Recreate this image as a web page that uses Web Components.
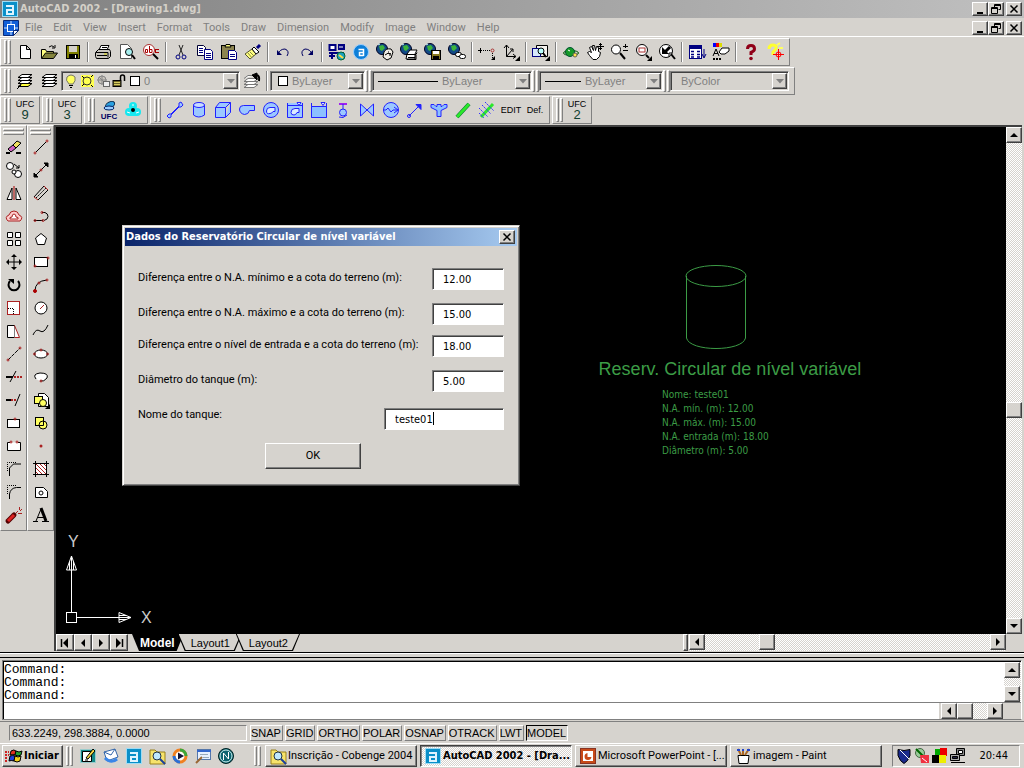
<!DOCTYPE html>
<html lang="pt-BR">
<head>
<meta charset="utf-8">
<title>AutoCAD 2002 - [Drawing1.dwg]</title>
<style>
html,body{height:100%}
body{margin:0;--face:#d6d3ce;background:var(--face);color:#000;--ui:"DejaVu Sans Condensed","DejaVu Sans",sans-serif;--label:Roboto,"Liberation Sans",sans-serif;--narrow:"Liberation Sans",Arial,sans-serif;font:11px/14px var(--ui)}
</style>
</head>
<body>
<cad-desktop></cad-desktop>
<script>
const svg = (body, attrs = '') => `<svg viewBox="0 0 20 20" width="20" height="20" fill="none" stroke="#000" ${attrs}>${body}</svg>`;
const globe = '<circle cx="7" cy="7" r="5.5" fill="#124a86" stroke="#002"/><path d="M4 4l4-1 2 3-3 3-2-1z" fill="#3cb43c" stroke="none"/><path d="M3 3l2-1" stroke="#cff"/>';
const blueA = '<rect x="2.500" y="2.500" width="15" height="15" fill="#0a8fc8" stroke="#9fdcf4"/><path d="M6 7h7v8H7v-4h6" stroke="#dff4ff" stroke-width="2" fill="none"/>';
const folderMag = '<path d="M3 4h5l2 2h8v12H3z" fill="#f7e36a" stroke="#98801c"/><circle cx="10" cy="10" r="4" fill="#bfe8ff" stroke="#234"/><path d="M13 13l5 5" stroke="#1c3f9c" stroke-width="2"/>';
const ICONS = {
 appA: blueA,
 doc: '<path d="M2.500 2.500h15v10l-5 5h-10z" fill="#1260d8" stroke="#0a2a78"/><path d="M10 3v14M3 10h14" stroke="#cfe4ff"/><rect x="6.500" y="6.500" width="7" height="7" fill="#1260d8" stroke="#fff"/><path d="M12.500 17.500v-5h5z" fill="#fff" stroke="#0a2a78"/>',
 new: '<path d="M5.500 3.500h6l4 4v9h-10zM11.500 3.500v4h4" fill="#fff"/>',
 open: '<path d="M2.500 16V7.500h4l1 2h7V11" fill="#ffff80"/><path d="M2.500 16.500l4-5.500h12l-4 5.500z" fill="#84843c"/><path d="M10 5q3-2.500 5 0M16 3v3h-3"/>',
 save: '<rect x="3.500" y="3.500" width="13" height="13" fill="#808000"/><rect x="6" y="4" width="8" height="6" fill="#d4d0c8" stroke="none"/><path d="M6 12h9v5H6z" fill="#000" stroke="none"/><path d="M12.500 13v3" stroke="#fff"/>',
 print: '<path d="M6 8l2-4.500h8L14 8z" fill="#fff"/><path d="M2.500 10.500l3-3h11l1 2v5l-2 2h-12l-1-2z" fill="#c8c4bc"/><path d="M3 10.500h12v5M4 13.500h10"/><path d="M9 5.500h5"/><path d="M11 12h3" stroke="#cc0"/>',
 preview: '<path d="M3.500 2.500h7l4 4v10h-11z" fill="#fff" stroke="#555"/><circle cx="12" cy="10" r="3.500" fill="#a8f0f0"/><path d="M15 13l3 4" stroke-width="2"/>',
 find: '<circle cx="8" cy="8" r="5.500" fill="#fff" stroke="#a33"/><path d="M4.500 7.500h2v3h-2zM8.500 4v6.500h2.500V7.500H9" stroke="#a00"/><path d="M12 12l5 5" stroke-width="2"/><path d="M14 7.500h4M14 10.500h4M14.500 7v4" stroke="#a00"/>',
 cut: '<path d="M8 3l4 10M12 3L8 13" stroke="#222"/><circle cx="7" cy="15" r="2" stroke="#000080"/><circle cx="13" cy="15" r="2" stroke="#000080"/>',
 copy: '<path d="M2.500 3.500h6l2 2v8h-8z" fill="#fff" stroke="#003"/><path d="M9.500 7.500h6l2 2v8h-8z" fill="#fff" stroke="#000080"/><path d="M4 6.500h4M4 8.500h4M4 10.500h4M11 11.500h5M11 13.500h5M11 15.500h5" stroke="#000080"/>',
 paste: '<rect x="2.500" y="3.500" width="13" height="13" fill="#8c8450"/><path d="M6 5l1-2.500h4L12 5z" fill="#ffff80"/><path d="M9.500 8.500h6l2 2v7h-8z" fill="#fff" stroke="#000080"/><path d="M11 12.500h5M11 14.500h5" stroke="#000080"/>',
 brush: '<path d="M2 12l7-5 4 5-6 5z" fill="#ffff80" stroke="#553"/><path d="M9 7l2-2 5 5-3 2z" fill="#fff"/><path d="M14 6l3-3" stroke="#000080" stroke-width="3"/><path d="M5 11l4 5M7 10l4 4" stroke="#884"/>',
 undo: '<path d="M5 12q2-5 7-5 5 2 2 7" stroke="#000060"/><path d="M4 8v5h5z" fill="#000060" stroke="none"/>',
 redo: '<path d="M15 12q-2-5-7-5-5 2-2 7" stroke="#000060"/><path d="M16 8v5h-5z" fill="#000060" stroke="none"/>',
 today: '<rect x="2.500" y="3" width="6" height="5" fill="#fff" stroke="#000080" stroke-width="2"/><rect x="11" y="2" width="7" height="6" fill="#000080" stroke="none"/><path d="M2 11h15M5 11v6M2 14h6" stroke="#000080" stroke-width="2"/><path d="M12 5h4" stroke="#fff"/><circle cx="14" cy="14" r="4" fill="#1aa0c0" stroke="#063"/><path d="M12 13l4 3" stroke="#fd4" stroke-width="2"/>',
 point: '<circle cx="10" cy="10" r="7.500" fill="#0d7fd8" stroke="#9ccfff"/><path d="M7.500 7.500h5v6.500M12.500 10.500h-4v3h4" stroke="#fff" stroke-width="1.500"/>',
 g1: globe + '<path d="M9 10q2-4 7-3l2 3-2 6-4 2-4-3z" fill="#f2efe8"/><path d="M10 13q3-3 6-1M13 10h1M15 11v3"/>',
 g2: globe + '<path d="M8 12l3-4h7l-2 4v5H7z" fill="#fff"/><path d="M7 12.500h10l1-2M9 15.500h7M8 17.500h9V13"/>',
 g3: globe + '<rect x="8.500" y="8.500" width="9" height="9" fill="#887a20"/><path d="M10 9h6v3h-6z" fill="#fff" stroke="none"/><path d="M10 14h6v3h-6z" fill="#000" stroke="none"/>',
 g4: globe + '<rect x="8.500" y="10.500" width="6" height="4" rx="2" fill="#fff"/><rect x="12.500" y="12.500" width="6" height="4" rx="2" fill="#fff"/>',
 track: '<path d="M2 8.500h11M15.500 11v5" stroke-dasharray="1 1"/><path d="M3.500 6v5M1 8.500h4"/><circle cx="15.500" cy="8.500" r="1.500" stroke="#a33"/><path d="M18 14v4h-4z" fill="#000" stroke="none"/>',
 ucs: '<path d="M5.500 3v11.500h9M5.500 14.500l6-7M3 6l2.500-3L8 6M12 12l3 2.500-3 2M9 7h3v3"/><path d="M19 14v5h-5z" fill="#000" stroke="none"/>',
 view: '<path d="M5.500 3.500h11v11h-11z" fill="#f4f2ee"/><rect x="1.500" y="6.500" width="8" height="8" fill="#d6e8fa" stroke="#000080"/><circle cx="10" cy="9" r="3" fill="#bff"/><path d="M12 11l3 4" stroke-width="2"/><path d="M19 14v5h-5z" fill="#000" stroke="none"/>',
 orbit: '<ellipse cx="10" cy="11" rx="7.500" ry="2.500" stroke="#050"/><circle cx="9" cy="10" r="4.500" fill="#169a28" stroke="#053"/><path d="M7 8l2 1" stroke="#fff"/><circle cx="14" cy="13" r="2" fill="#ffe34a" stroke="#665"/>',
 pan: '<path d="M4.500 13.500l-2-3 2-1 2 1-2-5 2-1 2 4-1-5 2 0 1 5 1-4 2 1v4l2 1-1 4-3 3H8z" fill="#fff"/><path d="M15.500 1v7M12 4.500h7M14 2.500h3M14 6.500h3"/>',
 zoomrt: '<circle cx="7" cy="7.500" r="4.500" fill="#fff"/><path d="M11 11l5 6" stroke-width="2"/><path d="M16.500 2v4M14 4.500h5M14 8.500h5"/>',
 zoomw: '<circle cx="9" cy="8" r="5.500" fill="#fff"/><rect x="6" y="6" width="6" height="4" stroke="#a33"/><path d="M13 13l3 3" stroke-width="2"/><path d="M19 14v5h-5z" fill="#000" stroke="none"/>',
 zoomp: '<circle cx="9" cy="9" r="6.500" fill="#fff"/><path d="M13 5l-5 5" stroke-width="3"/><path d="M5 5v7h7z" fill="#000" stroke="none"/><path d="M14 12l4 5" stroke-width="2"/><path d="M12 15v-4h3"/>',
 dc: '<rect x="2.500" y="3.500" width="12" height="13" fill="#fff" stroke="#000080"/><path d="M2 3h13v4H2z" fill="#000080" stroke="none"/><path d="M4 9.500h3M4 12.500h3M4 15h3M10 9.500h3M10 12.500h3M10 15h3" stroke="#000080" stroke-width="1.500"/><path d="M17 7v8M15 12l2 4 2-4" stroke="#000080"/>',
 props: '<path d="M2 3h3" stroke="#00f" stroke-width="4"/><path d="M5 3h3" stroke="#e00" stroke-width="4"/><path d="M8 3h3" stroke="#dd0" stroke-width="4"/><path d="M2 14l3-7 3 7M3 11.500h4"/><path d="M2 17h9" stroke-width="2" stroke-dasharray="2 1"/><path d="M8 10l3-4h7v3l-4 3h-4z" fill="#fff"/>',
 help: '<path d="M6.500 7q0-3.500 3.500-3.500T13.500 7q0 2-3.500 3.500V13" stroke="#900018" stroke-width="3"/><circle cx="10" cy="16.500" r="1.800" fill="#900018" stroke="none"/>',
 aa: '<path d="M4 7q0-4 4-4t3 4l-3 3v3" stroke="#ffff30" stroke-width="3"/><path d="M12 3l3-2M14 6h4" stroke="#ffff60" stroke-width="2"/><path d="M13.500 7v11M8 12.500h11" stroke="#f00"/><circle cx="13.500" cy="12.500" r="2.500" stroke="#f00"/>',
 layers: '<path d="M3 6.500l4-3h10l-4 3zM3 9.500l4-3h10l-4 3zM3 12.500l4-3h10l-4 3z" fill="#fff"/><path d="M3 15.500l4-3h10l-4 3z" fill="#ffff40"/><path d="M2 18l4-4"/>',
 layers2: '<path d="M3 15.500l4-3h11l-4 3zM3 12.500l4-3h11l-4 3zM3 9.500l4-3h11l-4 3zM3 6.500l4-3h11l-4 3z" fill="#fff"/>',
 layers3: '<path d="M2 16.500l4-3h10l-4 3zM2 13.500l4-3h10l-4 3zM2 10.500l4-3h10l-4 3zM2 7.500l4-3h6" fill="#fff" stroke="#777"/><path d="M17 10q1-6-3-6" stroke-width="2"/><path d="M10 4l5-2v7z" fill="#000"/>',
 bulb: '<path d="M8 13q-4-4-2-7 4-4 8 0 1 4-2 7z" fill="#ffff60" stroke="#776"/><path d="M8 14.500h4M9 16.500h2"/>',
 sun: '<rect x="4" y="4" width="13" height="12" fill="#ffff50" stroke="none"/><circle cx="10" cy="10" r="4" fill="#ffff50" stroke="#333"/><path d="M5 5l2 2M14 14l2 2M16 4l-2 2M5 15l2-2"/>',
 freeze: '<circle cx="9" cy="9" r="4" stroke="#888" fill="#c8c4bc"/><path d="M4 9h10M9 4v10M6 6l6 6" stroke="#888"/><rect x="10.500" y="10.500" width="6" height="5" fill="#eee" stroke="#666"/>',
 lock: '<rect x="4" y="9.500" width="8" height="6" fill="#6b6428"/><path d="M5 11.500h6M5 13.500h6" stroke="#d8ce60"/><path d="M11.500 9V6q0-2 2-2t2 2v4" stroke-width="1.500"/>',
 swatch: '<rect x="5.500" y="5.500" width="9" height="9" fill="#fff"/>',
 ufcA: '<ellipse cx="11" cy="5" rx="5" ry="3" fill="#2aa0e0" transform="rotate(-30 11 5)" stroke="#024"/><ellipse cx="10" cy="8" rx="5" ry="2" stroke="#026" fill="#9cf"/>',
 ufcB: '<circle cx="10" cy="6" r="4" fill="#18e8f0" stroke="none"/><circle cx="6" cy="12" r="4" fill="#18e8f0" stroke="none"/><circle cx="14" cy="12" r="4" fill="#18e8f0" stroke="none"/><path d="M5 16h10l-5-5z" fill="#18e8f0" stroke="none"/><circle cx="10" cy="10" r="2" fill="#000" stroke="none"/><path d="M4 12l3 1M16 12l-3 1M9 5h2" stroke="#fff"/>',
 u1: '<path d="M2 16l2 2 2-1 0-2 8-8 2 0 2-2-2-3-2 1v3L6 14 4 14z" fill="#9cc8ff"/>',
 u2: '<path d="M4.500 5v10q5 4 11 0V5" fill="#9cc8ff"/><ellipse cx="10" cy="5" rx="5.500" ry="2.500" fill="#c8dcff"/>',
 u3: '<path d="M2.500 7.500h10v10h-10zM2.500 7.500l4-5h11l-5 5M17.500 2.500v10l-5 5" fill="#9cc8ff"/>',
 u4: '<path d="M2.500 9q0-3.500 4-3.500h11v5h-5q-1 4-5 4-5-1-5-5.500z" fill="#9cc8ff"/>',
 u5: '<circle cx="10" cy="10" r="7.500" fill="#9cc8ff"/><path d="M5.500 11q0-3.500 3.500-3.500h5v4h-2q-1 2-3 2-3.500 1-3.500-2.500z" fill="#dcecff"/>',
 u6: '<path d="M2.500 3v14.500h15V3M2.500 5.500h15" fill="#9cc8ff"/><path d="M6 12.500q0-4 4-4h4v4h-2q-1 2.500-3 2.500-3 0-3-2.500z" fill="#dcecff"/><path d="M12 2.500h4l-2 3z" fill="#fff"/>',
 u7: '<path d="M2.500 3v14.500h15V3"/><path d="M2.500 6.500h15v11h-15z" fill="#8cc0ff"/><path d="M12 2.500h4l-2 3z" fill="#fff"/>',
 u8: '<path d="M6 4h8" stroke="#a020f0" stroke-width="2"/><path d="M10 4v6"/><circle cx="10" cy="12.500" r="3.500" fill="#9cc8ff"/><path d="M6 17q4 2 8-2"/>',
 u9: '<path d="M3.500 4v12l13-12v12z" fill="#9cc8ff"/>',
 u10: '<circle cx="10" cy="10" r="7.500" fill="#9cc8ff"/><path d="M2 10h3l2-2 3 4 2-2h5M13 7l4 3-4 3"/>',
 u11: '<path d="M4 16L15 5"/><path d="M11 4.500h5v5z" fill="#22f"/><circle cx="4" cy="16" r="1.500"/>',
 u12: '<path d="M2 4.500h3l2 2h1v-2h4v2h1l2-2h3v3l-6 3v6h-4v-6l-6-3z" fill="#8cc0ff"/>',
 u13: '<path d="M4 17L16 4" stroke="#063" stroke-width="4"/><path d="M4 17L16 4" stroke="#2be82b" stroke-width="3"/>',
 u14: '<path d="M4 17L16 4" stroke="#2be82b" stroke-width="3"/><path d="M2 8l9 9M5 5l9 9M8 2l9 9M2 13l5 5" stroke="#33f" stroke-dasharray="2 1"/>',
 erase: '<path d="M4 12l5-4 3 3-5 4z" fill="#d060c0"/><path d="M9 8l4-4 4 2-5 5z" fill="#f0e060"/><path d="M2 16h4M12 16h5" stroke-width="2"/>',
 copyo: '<circle cx="6" cy="6" r="3.500" fill="#fff"/><circle cx="14" cy="14" r="3.500" fill="#fff"/><circle cx="10" cy="12" r="2" fill="#fff"/><path d="M10 4l5 4M15 5v3h-3"/>',
 mirror: '<path d="M8 5v11.500H3zM12 5v11.500h5z" fill="#fff"/><path d="M10 3v14" stroke="#a00"/>',
 offset: '<path d="M4 15q-4-4 1-6 1-4 5-4t5 4q5 2 1 6z" fill="#fcc" stroke="#a22"/><path d="M6 13q-1-2 2-2 0-3 2-3t2 3q3 0 2 2z" fill="#fff" stroke="#a22"/>',
 array: '<path d="M3.500 3.500h5v5h-5zM11.500 3.500h5v5h-5zM3.500 11.500h5v5h-5zM11.500 11.500h5v5h-5z" fill="#fff"/>',
 move: '<path d="M10 4v12M4 10h12"/><path d="M10 2l3 3H7zM10 18l3-3H7zM2 10l3-3v6zM18 10l-3-3v6z" fill="#000" stroke="none"/>',
 rotate: '<path d="M6 6a5.500 5.500 0 1 0 8 0" stroke-width="2"/><path d="M4 4h6v5z" fill="#000" stroke="none"/>',
 scale: '<rect x="3.500" y="3.500" width="12" height="13" fill="#fff" stroke="#a22"/><path d="M4 10.500h5.500V16" stroke-dasharray="1 1"/>',
 stretch: '<path d="M3.500 4.500h7v12h-7z" fill="#fff"/><path d="M10.500 4.500l5 12h-5" stroke="#a22" fill="#fff"/>',
 lengthen: '<path d="M4 16L16 4" stroke-dasharray="4 1"/><circle cx="4" cy="16" r="1" stroke="#a22"/><circle cx="16" cy="4" r="1" stroke="#a22"/>',
 trim: '<path d="M2 10h7" stroke-width="2"/><path d="M6 15l6-11"/><path d="M10 10h8" stroke="#a22" stroke-width="2" stroke-dasharray="2 1"/>',
 extend: '<path d="M2 10h5" stroke-width="2"/><path d="M7 10h5" stroke="#a22" stroke-width="2" stroke-dasharray="2 1"/><path d="M11 16l5-12"/>',
 brk1: '<rect x="3.500" y="6.500" width="12" height="8" fill="#fff"/><circle cx="11" cy="6" r="1" stroke="#a22"/>',
 brk2: '<path d="M6 6.500H3.500v8h13v-8H14" fill="#fff"/><circle cx="7" cy="6" r="1" stroke="#a22"/><circle cx="13" cy="6" r="1" stroke="#a22"/>',
 chamfer: '<path d="M5.500 17v-8l4-4H17"/><path d="M3.500 12V3.500H12" stroke-dasharray="1 1"/>',
 fillet: '<path d="M5.500 17v-5q1-6 7-6.500H17"/><path d="M3.500 12V3.500H12" stroke-dasharray="1 1"/>',
 explode: '<path d="M4 16l6-6" stroke="#500" stroke-width="5" stroke-linecap="round"/><path d="M4 16l6-6" stroke="#d22" stroke-width="3"/><path d="M12 8l2-2M15.500 2v3M18 4l-2 2M14 8.500h4" stroke="#a22"/>',
 line: '<path d="M5 15L15 5"/><circle cx="4" cy="16" r="1" stroke="#a22"/><circle cx="16" cy="4" r="1" stroke="#a22"/>',
 xline: '<path d="M4 16L16 4"/><path d="M3 17v-4l4 4zM17 3v4l-4-4z" fill="#000"/><circle cx="10" cy="10" r="1" stroke="#a22"/>',
 mline: '<path d="M3 14L13 3M7 17L17 7"/><path d="M5 15L15 5" stroke-dasharray="2 1"/><path d="M3 14l4 3M13 3l4 4" stroke="#a22"/>',
 pline: '<path d="M3 14.500h9M11 6.500h3q3 1 3 4t-4 4"/><circle cx="4" cy="14.500" r="1" stroke="#a22"/><circle cx="11" cy="6.500" r="1" stroke="#a22"/><circle cx="12" cy="14.500" r="1" stroke="#a22"/>',
 polygon: '<path d="M10 4.500l5.500 4.500-2 6.500h-7L4.500 9z" fill="#fff"/>',
 rect: '<rect x="3.500" y="5.500" width="13" height="9" fill="#fff"/><circle cx="4" cy="14" r="1" stroke="#a22"/><circle cx="17" cy="6" r="1" stroke="#a22"/>',
 arc: '<path d="M4 16q0-10 12-11"/><circle cx="4" cy="16" r="1.500" stroke="#a00" fill="#a00"/><circle cx="8" cy="8" r="1" stroke="#a22"/><circle cx="16" cy="5" r="1" stroke="#a22"/>',
 circle: '<circle cx="10" cy="10" r="6" fill="#fff"/><path d="M9 11l4-4" stroke="#a22"/>',
 spline: '<path d="M2 14q3-7 7-4t8-6"/>',
 ellipse: '<ellipse cx="10" cy="10" rx="6.500" ry="4" fill="#fff"/><circle cx="3.500" cy="10" r="1" stroke="#a22"/><circle cx="16.500" cy="10" r="1" stroke="#a22"/><circle cx="10" cy="6" r="1" stroke="#a22"/>',
 earc: '<path d="M5 12q-4-5 4-6 9 0 7 5-3 4-7 3" fill="#fff"/><circle cx="10" cy="14" r="1" stroke="#a22"/>',
 insert: '<path d="M7.500 3.500h6l4 4v9h-10z" fill="#fff"/><rect x="3.500" y="6.500" width="8" height="7" fill="#ffff60"/><circle cx="12" cy="13" r="3.500" fill="#ffff60"/><path d="M19 14v5h-5z" fill="#000" stroke="none"/>',
 block: '<rect x="4.500" y="4.500" width="8" height="8" fill="#ffff60"/><circle cx="12" cy="12" r="4" fill="#ffff60"/><path d="M4.500 12.500h8v-8"/>',
 dot: '<circle cx="10" cy="10" r="1.500" fill="#a22" stroke="none"/>',
 hatch: '<rect x="4.500" y="4.500" width="11" height="11" fill="#fff"/><path d="M4 12l4 4M4 8l8 8M4 4l12 12M8 4l8 8M12 4l4 4" stroke="#a22"/><path d="M4.500 2v16M15.500 2v16M2 4.500h16M2 15.500h16"/>',
 region: '<path d="M4.500 5.500h8l4 4v6h-12z" fill="#fff"/><circle cx="10" cy="11" r="2"/>',
 mtext: '<path d="M10 3l5 13" stroke-width="3"/><path d="M10 4L5 16M7 12.500h6M2 16.500h5M11 16.500h7"/>',
 start: '<path d="M7 5q3-2 5 0l-1 4q-2-1-5 0z" fill="#e03020"/><path d="M12 5q3 2 6 0l-1 4q-3 2-6 0z" fill="#20a030"/><path d="M6 10q3-1 5 0l-1 5q-3-1-5 0z" fill="#2040e0"/><path d="M11 10q3 2 6 0l-1 5q-3 2-6 0z" fill="#f0d020"/><path d="M1 6h4M1 9h4M1 12h3M1 15h3" stroke="#c22" stroke-width="2" stroke-dasharray="2 1"/>',
 desk: '<rect x="2.500" y="3.500" width="15" height="13" fill="#138a8a" stroke="#9cc"/><path d="M4.500 5.500h9v10h-9z" fill="#fff"/><path d="M8 12l7-9 2 2-7 8z" fill="#f5d742"/><path d="M7 14h3"/>',
 mail: '<path d="M3 6l11-3 3 8-11 4z" fill="#fff" stroke="#36a"/><path d="M3 6l7 3 4-6" stroke="#36a"/><path d="M4 12q6 6 12 1" stroke="#3a86e8" stroke-width="3"/>',
 folder: folderMag,
 media: '<circle cx="10" cy="10" r="6" fill="#fff" stroke="#f08020" stroke-width="3"/><path d="M4 10a6 6 0 0 0 6 6" stroke="#2a70d8" stroke-width="3"/><path d="M10 4a6 6 0 0 1 6 6" stroke="#3ba83b" stroke-width="3"/><path d="M8 6.500l6 3.500-6 3.500z" fill="#113" stroke="none"/>',
 note: '<rect x="4.500" y="3.500" width="13" height="10" fill="#e8f0ff" stroke="#57a"/><path d="M4 5h14" stroke="#36c" stroke-width="2"/><path d="M3 17l6-6" stroke="#963" stroke-width="2"/><path d="M7 8.500h8M10 11.500h6" stroke="#9ab"/>',
 netscape: '<circle cx="10" cy="10" r="7.500" fill="#0c6470" stroke="#022"/><circle cx="10" cy="10" r="6" stroke="#cee"/><path d="M7.500 14V7l5 6V6" stroke="#fff"/>',
 ppt: '<rect x="2.500" y="2.500" width="15" height="15" fill="#c84a18" stroke="#832"/><rect x="5" y="5" width="10" height="10" fill="#fff" stroke="none"/><path d="M9.500 7a3.500 3.500 0 1 0 4 4h-4z" fill="#c84a18" stroke="none"/>',
 paint: '<path d="M5 9.500h11l-1 8H6z" fill="#fff"/><path d="M8 9L5 3M10 9V3M12 9l4-6" stroke-width="2" stroke="#a62"/><path d="M4 4h3M9 4h2M14 4h3" stroke="#24c" stroke-width="2"/>',
 shield: '<path d="M4 3.500q6 2 12 0v6q-2 6-6 8-4-2-6-8z" fill="#1a2a8c"/><path d="M6 4l9 9" stroke="#fff"/>',
 tray2: '<circle cx="8" cy="7" r="4.500" fill="#9c9" stroke="#464"/><path d="M4 3l9 9" stroke="#060" stroke-width="2"/><path d="M8 9h9v8H9z" fill="#f03040" stroke="none"/><path d="M10 12l5 4" stroke="#fff"/>',
 tray3: '<path d="M2 9h8v8H2z" fill="#000" stroke="none"/><path d="M5 3h6v6H5z" fill="#0a0" stroke="none"/><path d="M10 2h7v8h-7z" fill="#e00" stroke="none"/><path d="M9 9h7v8H9z" fill="#ee0" stroke="none"/>',
 net: '<path d="M8.500 2.500h8v7h-8z" fill="#888"/><path d="M10.500 4.500h4v3h-4z" fill="#fff"/><path d="M2.500 8.500h9v6h-9z" fill="#aaa"/><path d="M4.500 10.500h5v2h-5zM3 16.500h14" fill="#224"/>',
 min: '<path d="M7 14h6" stroke-width="2"/>',
 restore: '<path d="M8.500 8V5.500h6v5h-2M8 6.500h7M5.500 8.500h6v6h-6zM5 9.500h7"/>',
 close: '<path d="M6.500 6.500l7 7M13.500 6.500l-7 7" stroke-width="1.500"/>',
 up: '<path d="M10 8l4 4H6z" fill="#000" stroke="none"/>',
 down: '<path d="M10 12L6 8h8z" fill="#000" stroke="none"/>',
 left: '<path d="M8 10l4-4v8z" fill="#000" stroke="none"/>',
 right: '<path d="M12 10L8 6v8z" fill="#000" stroke="none"/>',
 first: '<path d="M8 10l5-5v10z" fill="#000" stroke="none"/><path d="M6.500 6v8" stroke-width="1.500"/>',
 last: '<path d="M12 10L7 5v10z" fill="#000" stroke="none"/><path d="M13.500 6v8" stroke-width="1.500"/>',
 drop: '<path d="M10 12.500L6 8h8z" fill="#808080" stroke="none"/>'
};
const RAISED = 'border:1px solid;border-color:#fff #404040 #404040 #fff;box-shadow:inset -1px -1px #808080;background:var(--face);';
const SUNK = 'border:1px solid;border-color:#808080 #fff #fff #808080;box-shadow:inset 1px 1px #404040;';
const DITHER = 'background:repeating-conic-gradient(#fff 0 25%,var(--face) 0 50%) 0 0/2px 2px;';

class Part extends HTMLElement {
  connectedCallback() {
    if (this.shadowRoot) return;
    const root = this.attachShadow({ mode: 'open' });
    root.innerHTML = `<style>*{box-sizing:border-box}:host{box-sizing:border-box}button{font:inherit;color:inherit;padding:0;margin:0}${this.css()}</style>${this.html()}`;
  }
  a(name, fallback = '') { return this.getAttribute(name) ?? fallback; }
}
const define = (tag, css, html) => customElements.define(tag, class extends Part {
  css() { return typeof css === 'function' ? css(this) : css; }
  html() { return typeof html === 'function' ? html(this) : html; }
});

define('cad-icon', ':host{display:block;width:20px;height:20px}svg{display:block}',
  e => svg(ICONS[e.a('name')] || '', e.hasAttribute('blue') ? 'style="stroke:#22f"' : ''));

define('win-button', `:host{display:block;width:16px;height:14px}
  button{${RAISED}width:100%;height:100%;display:flex;align-items:center;justify-content:center;overflow:hidden}
  cad-icon{flex:none}`,
  e => `<button aria-label="${e.a('icon')}"><cad-icon name="${e.a('icon')}"></cad-icon></button>`);

define('window-controls', ':host{display:flex;margin-left:auto;padding-right:2px}.gap{margin-left:2px}',
  '<win-button icon="min"></win-button><win-button icon="restore"></win-button><win-button class="gap" icon="close"></win-button>');

define('title-bar', `:host{display:flex;align-items:center;height:18px;background:linear-gradient(90deg,#808080,#c0c0c0);color:#d4d0c8;font-weight:bold}
  h1{font:inherit;margin:0}`,
  '<cad-icon name="appA"></cad-icon><h1><slot></slot></h1><window-controls></window-controls>');

define('menu-bar', `:host{display:flex;align-items:center;height:19px;color:#808080;padding-left:1px}
  nav{display:flex;margin-left:-1px;font-family:var(--label)}button{background:none;border:0;padding:0 6px 0 5px;height:18px}`,
  e => `<cad-icon name="doc"></cad-icon><nav>${e.a('items').split(',').map(t => `<button>${t}</button>`).join('')}</nav><window-controls></window-controls>`);

define('tool-button', `:host{display:block;width:24px;height:22px}
  button{background:none;border:0;width:100%;height:100%;display:flex;flex-direction:column;align-items:center;justify-content:center;font:9px/9px var(--narrow);position:relative}
  b{font:13px/12px var(--narrow);color:#104030}
  .over{position:absolute;bottom:0;font:bold 8px/8px var(--narrow);color:#000060}`,
  e => `<button aria-label="${e.a('icon') || e.a('text')}">${e.a('icon') ? `<cad-icon name="${e.a('icon')}" ${e.a('icon').match(/^u\d/) ? 'blue' : ''}></cad-icon>` : ''}${e.a('text') ? `<span>${e.a('text')}</span>` : ''}${e.a('num') ? `<b>${e.a('num')}</b>` : ''}${e.a('over') ? `<span class="over">${e.a('over')}</span>` : ''}</button>`);

define('tool-grip', `:host{display:flex;gap:1px;flex:none}
  i{border:1px solid;border-color:#fff #808080 #808080 #fff;width:3px;height:100%}
  :host([flat]){flex-direction:column}:host([flat]) i{width:100%;height:3px}`, '<i></i><i></i>');

define('tool-bar', `:host{display:flex;align-items:center;height:28px;border:1px solid;border-color:#fff #808080 #808080 #fff;padding:2px 2px 2px 3px;width:max-content}
  tool-grip{height:24px;margin-right:2px}
  ::slotted(tool-grip){height:22px}`,
  e => `<tool-grip></tool-grip>${e.a('icons') ? e.a('icons').split(' ').map(n => n === '|' ? '<tool-sep></tool-sep>' : `<tool-button icon="${n}"></tool-button>`).join('') : ''}<slot></slot>`);

define('tool-sep', ':host{display:block;width:2px;height:20px;margin:0 2px;border-left:1px solid #808080;border-right:1px solid #fff}', '');

define('combo-box', `:host{display:block;height:20px}
  .box{${SUNK}height:100%;display:flex;align-items:center;padding:1px 1px 1px 2px;color:#808080}
  select{appearance:none;border:0;background:none;color:#808080;opacity:1;font:11px/14px var(--narrow);flex:1;min-width:0;padding:0 3px;margin:0}
  .drop{${RAISED}width:15px;height:100%;display:flex;align-items:center;justify-content:center;overflow:hidden}
  .drop cad-icon,.ln{flex:none}
  .ln{height:1px;background:#000;margin:0 1px 0 3px}
  :host([blank]) select{padding-left:8px}`,
  e => `<div class="box"><slot></slot>${e.a('line') ? `<span class="ln" style="width:${e.a('line')}px"></span>` : ''}<select aria-label="${e.a('label')}" disabled><option>${e.a('value')}</option></select><span class="drop"><cad-icon name="drop"></cad-icon></span></div>`);

define('tool-palette', `:host{display:flex;flex-direction:column;align-items:center;width:27px;height:406px;border:1px solid;border-color:#fff #808080 #808080 #fff;padding:2px 1px}
  tool-grip{width:21px;height:7px}tool-button{height:23px}`,
  e => `<tool-grip flat></tool-grip>${e.a('icons').split(' ').map(n => `<tool-button icon="${n}"></tool-button>`).join('')}`);

define('scroll-bar', e => `:host{display:flex;${DITHER}flex-direction:${e.hasAttribute('vertical') ? 'column' : 'row'}}
  win-button{width:16px;height:16px;flex:none}
  .thumb{${RAISED}width:16px;height:16px;flex:none}
  .a{flex:${e.a('before', '0')} 0 0px}.b{flex:${e.a('after', '1')} 0 0px}`,
  e => { const v = e.hasAttribute('vertical'); return `<win-button icon="${v ? 'up' : 'left'}"></win-button><span class="a"></span>${e.hasAttribute('before') ? '<span class="thumb"></span>' : ''}<span class="b"></span><win-button icon="${v ? 'down' : 'right'}"></win-button>`; });

define('sheet-tab', `:host{display:block;height:17px;margin-left:-6px}
  button{position:relative;border:0;height:17px;padding:0 12px 0 13px;background:#000;clip-path:polygon(0 0,100% 0,calc(100% - 7px) 100%,7px 100%);font:11px/16px var(--narrow)}
  button::before{content:"";position:absolute;inset:0 1px 1px 1px;background:var(--face);clip-path:polygon(0 0,100% 0,calc(100% - 7px) 100%,7px 100%)}
  span{position:relative}
  :host([active]) button{color:#fff;font-weight:bold;font-size:12px;padding:0 9px 0 8px}
  :host([active]) button::before{background:#000}`,
  '<button><span><slot></slot></span></button>');

define('field-row', `:host{display:flex;justify-content:space-between;align-items:flex-start}
  label{line-height:14px;padding-top:3px;font-family:var(--label)}
  .wrap{position:relative;width:72px}
  :host([wide]) .wrap{width:120px}
  :host([wide]) label{padding-top:0}
  input{${SUNK}display:block;width:100%;height:22px;padding:1px 0 0 10px;font:inherit;background:#fff;border-radius:0;outline:0}
  .caret{position:absolute;top:4px;left:49px;width:1px;height:13px;background:#000}`,
  e => `<label for="f">${e.a('label')}</label><span class="wrap"><input id="f" value="${e.a('value')}">${e.hasAttribute('wide') ? '<span class="caret"></span>' : ''}</span>`);

define('tank-dialog', `:host{display:block;color:#000;border:1px solid;border-color:var(--face) #404040 #404040 var(--face);box-shadow:inset 1px 1px #fff,inset -1px -1px #808080;background:var(--face);padding:2px}
  header{display:flex;align-items:center;height:18px;padding:0 2px 0 1px;background:linear-gradient(90deg,#0a246a,#a6caf0);color:#fff;font-weight:bold}
  h2{font:inherit;margin:0}header win-button{margin-left:auto}
  form{padding:22px 13px 14px;display:grid;grid-template-rows:35px 32px 35px 38px 35px 26px}
  .ok{${RAISED}width:96px;justify-self:center;margin-right:16px;font-family:var(--label)}`,
  `<header><h2>Dados do Reservatório Circular de nível variável</h2><win-button icon="close"></win-button></header>
  <form><field-row label="Diferença entre o N.A. mínimo e a cota do terreno (m):" value="12.00"></field-row>
  <field-row label="Diferença entre o N.A. máximo e a cota do terreno (m):" value="15.00"></field-row>
  <field-row label="Diferença entre o nível de entrada e a cota do terreno (m):" value="18.00"></field-row>
  <field-row label="Diâmetro do tanque (m):" value="5.00"></field-row>
  <field-row wide label="Nome do tanque:" value="teste01"></field-row>
  <button type="button" class="ok">OK</button></form>`);

define('drawing-view', `:host{display:block;position:relative;background:#000;overflow:hidden;color:#3c9c46;min-height:506px}
  .tank{position:absolute;left:538px;top:137px;width:272px;display:grid;justify-items:center}
  h3{font:18px/22px var(--narrow);margin:8px 0 0;white-space:nowrap}
  ul{list-style:none;margin:8px 0 0;padding:0;font:10px/14px "DejaVu Sans Condensed",sans-serif;width:136px;white-space:nowrap}
  .cyl,.ucs{display:block;fill:none;stroke:currentColor}
  .cyl{margin-right:28px}
  .ucs{position:absolute;left:7px;bottom:6px;color:#fff}
  text{font:16px var(--narrow);fill:#ccc;stroke:none}
  tank-dialog{position:absolute;left:66px;top:98px;width:398px}`,
  `<svg class="ucs" width="96" height="100"><rect x="3.500" y="84.500" width="10" height="10"/><path d="M8.500 84V28M14 89.500h54M8.500 28l-5 14h10zM6.500 42v-8M10.500 42v-8M68 89.500l-12-5v10zM56 87.500h7M56 91.500h7"/><text x="5" y="19">Y</text><text x="78" y="95">X</text></svg>
  <div class="tank"><svg class="cyl" width="62" height="86"><ellipse cx="31" cy="12" rx="30" ry="10.500"/><path d="M1.500 12v62c3 14 56 14 59 0V12"/></svg>
  <h3>Reserv. Circular de nível variável</h3>
  <ul><li>Nome: teste01</li><li>N.A. mín. (m): 12.00</li><li>N.A. máx. (m): 15.00</li><li>N.A. entrada (m): 18.00</li><li>Diâmetro (m): 5.00</li></ul></div>
  <tank-dialog></tank-dialog>`);

define('sheet-bar', `:host{display:flex;height:17px;background:var(--face)}
  win-button{width:18px;height:17px}.tabs{display:flex;flex:1;padding-left:10px}
  scroll-bar{width:calc(100% / 3)}.nub{${RAISED}width:5px;margin-right:1px}`,
  `<win-button icon="first"></win-button><win-button icon="left"></win-button><win-button icon="right"></win-button><win-button icon="last"></win-button>
  <div class="tabs"><sheet-tab active>Model</sheet-tab><sheet-tab>Layout1</sheet-tab><sheet-tab>Layout2</sheet-tab></div>
  <span class="nub"></span><scroll-bar before="54" after="215"></scroll-bar>`);

define('command-line', `:host{display:block;border:1px solid #808080;border-right-color:#fff;margin:2px 2px 0 2px}
  .in{border:solid #000;border-width:1px 0 0 1px;background:var(--face)}
  .log{display:flex;height:40px;background:#fff}
  pre{margin:0;flex:1;padding-top:1px;font:13px/13px "Liberation Mono",monospace}
  scroll-bar{width:17px}
  .entry{display:flex;height:17px;border-top:1px solid #808080}
  input{flex:1;border:0;background:#fff;padding:0;outline:0;font:13px "Liberation Mono",monospace;min-width:0}
  .entry scroll-bar{width:62px;margin:0 18px 0 2px}`,
  `<div class="in"><div class="log"><pre>Command:
Command:
Command:</pre><scroll-bar vertical></scroll-bar></div><div class="entry"><input aria-label="Command"><scroll-bar before="0" after="1"></scroll-bar></div></div>`);

define('status-bar', `:host{display:flex;gap:2px;height:22px;border-top:1px solid #808080;margin-top:1px;padding:2px 0 2px 9px;font:11px/14px var(--narrow);align-items:center}
  output,button{height:16px;border:1px solid;border-color:#808080 #fff #fff #808080;background:none}
  output{width:238px;padding:0 2px;margin-right:1px}
  button{border-color:#fff #808080 #808080 #fff;padding:0 1px 0 0}
  .on{border-color:#000 #fff #fff #000}`,
  e => `<output>633.2249, 298.3884, 0.0000</output>${e.a('modes').split(' ').map(m => `<button class="${m === 'MODEL' ? 'on' : ''}">${m}</button>`).join('')}`);

define('task-button', `:host{display:block;flex:0 1 152px;min-width:0}
  button{${RAISED}width:100%;height:22px;display:flex;align-items:center;text-align:left;padding:0 2px;overflow:hidden;font-family:var(--label)}
  cad-icon{flex:none}span{white-space:nowrap}
  :host([active]) button,:host(.start) button{font-family:var(--ui);font-weight:bold}
  :host([active]) button{border-color:#404040 #fff #fff #404040;box-shadow:inset 1px 1px #808080;${DITHER}}
  :host(.start) button{padding:0 1px}`,
  e => `<button><cad-icon name="${e.a('icon')}"></cad-icon><span><slot></slot></span></button>`);

define('task-bar', `:host{display:flex;align-items:center;height:25px;border-top:1px solid #fff;padding:0 4px 0 2px}
  .start{flex:0 0 61px}
  tool-grip{height:20px;margin:0 3px}
  .quick{display:flex;width:175px}
  .quick tool-button{width:23px}
  .tasks{display:flex;gap:3px;flex:1;min-width:0;padding-left:1px}
  .tray{display:flex;align-items:center;height:22px;width:128px;border:1px solid;border-color:#808080 #fff #fff #808080}
  .tray cad-icon{width:18px}.tray cad-icon:first-child{margin-left:1px}
  time{margin-left:auto;padding-right:11px}`,
  `<task-button class="start" icon="start">Iniciar</task-button><tool-grip></tool-grip>
  <div class="quick">${'desk mail appA folder media note netscape'.split(' ').map(n => `<tool-button icon="${n}"></tool-button>`).join('')}</div>
  <tool-grip></tool-grip><div class="tasks"><task-button icon="folder">Inscrição - Cobenge 2004</task-button><task-button active icon="appA">AutoCAD 2002 - [Dra...</task-button><task-button icon="ppt">Microsoft PowerPoint - [...</task-button><task-button icon="paint">imagem - Paint</task-button></div>
  <div class="tray"><cad-icon name="shield"></cad-icon><cad-icon name="tray2"></cad-icon><cad-icon name="tray3"></cad-icon><cad-icon name="net"></cad-icon><time>20:44</time></div>`);

define('cad-desktop', `:host{display:flex;flex-direction:column;min-height:100vh;background:var(--face)}
  .bars{display:grid;gap:1px;padding:1px 0;border-top:1px solid #fff;margin-top:-1px}
  .row{display:flex;gap:2px}
  .layers{width:179px}.color{width:95px}.ltype{width:160px}.lweight{width:124px}.pstyle{width:119px;margin-right:3px}
  .layers cad-icon{width:16px}.layers cad-icon:first-child{margin-left:-3px}.color cad-icon{width:16px}
  main{display:flex;flex:1}
  .sheet{flex:1;display:grid;grid-template-columns:1fr 16px;grid-template-rows:1fr 17px;border:solid #404040;border-width:2px 0 0 2px;min-width:0;margin-right:2px}
  .split{border:solid #000;border-width:1px 0;height:6px;margin-top:1px;background:var(--face);box-shadow:inset 0 1px #fff}`,
  `<title-bar>AutoCAD 2002 - [Drawing1.dwg]</title-bar>
  <menu-bar items="File,Edit,View,Insert,Format,Tools,Draw,Dimension,Modify,Image,Window,Help"></menu-bar>
  <div class="bars">
   <tool-bar icons="new open save | print preview find | cut copy paste brush | undo redo | today point g1 g2 g3 g4 | track ucs | view | orbit pan zoomrt zoomw zoomp | dc props | help aa"></tool-bar>
   <tool-bar icons="layers layers2"><combo-box class="layers" label="Layer" value="0"><cad-icon name="bulb"></cad-icon><cad-icon name="sun"></cad-icon><cad-icon name="freeze"></cad-icon><cad-icon name="lock"></cad-icon><cad-icon name="swatch"></cad-icon></combo-box><tool-button icon="layers3"></tool-button><tool-sep></tool-sep><combo-box class="color" label="Color" value="ByLayer"><cad-icon name="swatch"></cad-icon></combo-box><tool-grip></tool-grip><combo-box class="ltype" label="Linetype" line="60" value="ByLayer"></combo-box><tool-grip></tool-grip><combo-box class="lweight" label="Lineweight" line="36" value="ByLayer"></combo-box><tool-grip></tool-grip><combo-box blank class="pstyle" label="Plot style" value="ByColor"></combo-box></tool-bar>
   <div class="row"><tool-bar><tool-button text="UFC" num="9"></tool-button></tool-bar><tool-bar><tool-button text="UFC" num="3"></tool-button></tool-bar><tool-bar><tool-button icon="ufcA" over="UFC"></tool-button><tool-button icon="ufcB"></tool-button></tool-bar><tool-bar icons="u1 u2 u3 u4 u5 u6 u7 u8 u9 u10 u11 u12 u13 u14"><tool-button text="EDIT"></tool-button><tool-button text="Def."></tool-button></tool-bar><tool-bar><tool-button text="UFC" num="2"></tool-button></tool-bar></div>
  </div>
  <main><tool-palette icons="erase copyo mirror offset array move rotate scale stretch lengthen trim extend brk1 brk2 chamfer fillet explode"></tool-palette><tool-palette icons="line xline mline pline polygon rect arc circle spline ellipse earc insert block dot hatch region mtext"></tool-palette>
   <section class="sheet"><drawing-view></drawing-view><scroll-bar vertical before="259" after="200"></scroll-bar><sheet-bar></sheet-bar><span></span></section></main>
  <div class="split"></div>
  <command-line></command-line>
  <status-bar modes="SNAP GRID ORTHO POLAR OSNAP OTRACK LWT MODEL"></status-bar>
  <task-bar></task-bar>`);
</script>
</body>
</html>
